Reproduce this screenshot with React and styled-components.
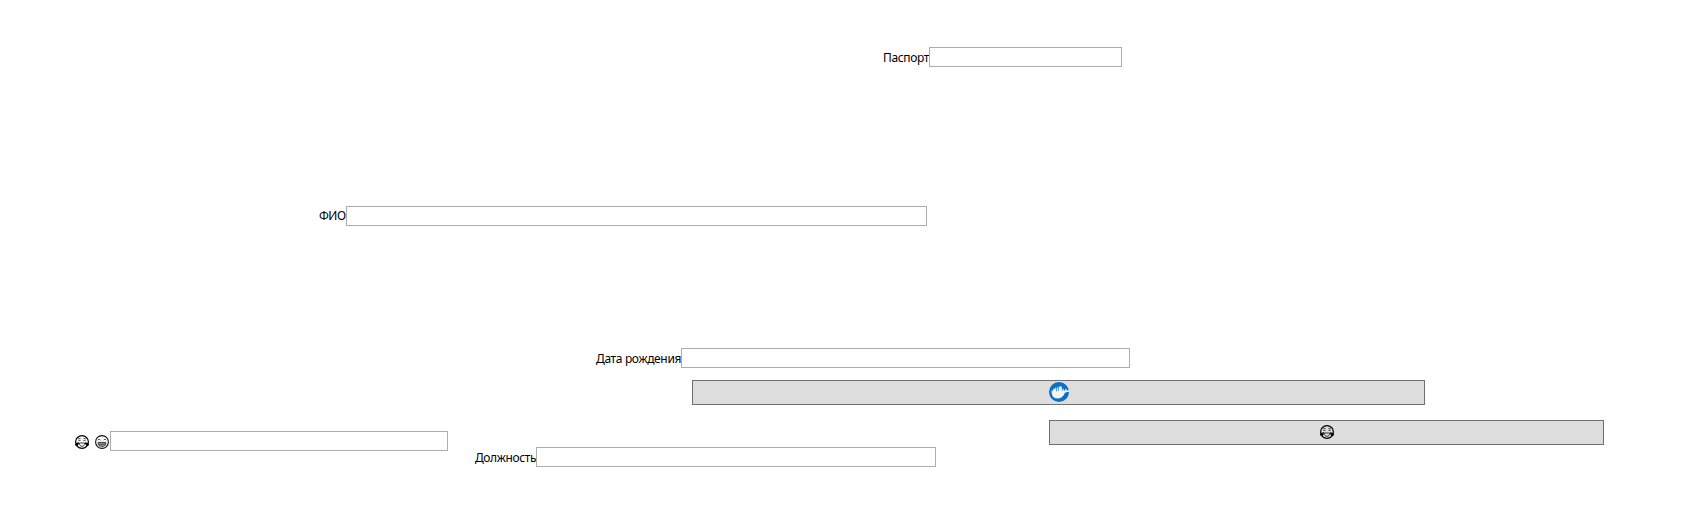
import React from "react";
import styled, { createGlobalStyle } from "styled-components";

const GlobalStyle = createGlobalStyle`
  *, *::before, *::after { box-sizing: border-box; }
  body { margin: 0; background: #fff; overflow: hidden; }
`;

const Form = styled.form`
  width: 1708px;
  height: 527px;
  padding-top: 47px;
  display: flex;
  flex-direction: column;
  align-items: flex-start;
  background: #fff;
  color: #000;
  font-family: "Noto Sans", "Open Sans", sans-serif;
  font-size: 12px;
`;

const Row = styled.div`
  display: flex;
  align-items: flex-start;
  margin-top: ${(p) => p.$gap || 0}px;
  padding-left: ${(p) => p.$indent}px;
`;

const Field = styled.label`
  display: flex;
  height: 20px;
  margin-top: ${(p) => p.$drop || 0}px;
  margin-left: ${(p) => p.$offset || 0}px;
`;

const Caption = styled.span`
  display: flex;
  gap: 4px;
  flex: none;
  width: ${(p) => p.$width}px;
  height: 20px;
  padding-top: ${(p) => p.$top ?? 3}px;
  line-height: 16px;
  white-space: nowrap;
  letter-spacing: ${(p) => p.$tracking || 0}px;
`;

const TextBox = styled.input`
  flex: none;
  width: ${(p) => p.$width}px;
  height: 20px;
  margin: 0;
  padding: 0 3px;
  border: 1px solid #abadb3;
  border-radius: 0;
  background: #fff;
  font: inherit;
  outline: none;
`;

const Button = styled.button`
  flex: none;
  display: flex;
  align-items: center;
  justify-content: center;
  width: ${(p) => p.$width}px;
  height: 25px;
  margin: 0 0 0 ${(p) => p.$offset || 0}px;
  padding: ${(p) => p.$pad || "0"};
  border: 1px solid #707070;
  border-radius: 0;
  background: #ddd;
`;

const Glyph = styled.svg`
  display: block;
  flex: none;
`;

function JoyFace() {
  return (
    <Glyph width="16" height="16" viewBox="0 0 16 16" fill="none" role="img" aria-label="😂">
      <circle cx="8" cy="8" r="6.4" stroke="#000" strokeWidth="1.2" />
      <path d="M4.2 4.9 6.6 4.3M4.3 6.4h2.3M11.8 4.9 9.4 4.3M11.7 6.4H9.4" stroke="#222" strokeWidth=".8" />
      <path d="M5.200 9h5.600c0 2-1.200 3.300-2.800 3.300S5.200 11 5.200 9Z" stroke="#222" strokeWidth=".9" />
      <path d="M4.900 8.200C2.700 8.300 1.100 9.300 1.100 10.500c0 1 .8 1.600 1.700 1.400C4.300 11.600 4.900 10.200 4.900 8.200ZM11.100 8.200c2.200.1 3.800 1.100 3.800 2.300 0 1-.8 1.600-1.700 1.400-1.500-.3-2.100-1.700-2.100-3.700Z" fill="#000" />
    </Glyph>
  );
}

function GrinFace() {
  return (
    <Glyph width="16" height="16" viewBox="0 0 16 16" fill="none" role="img" aria-label="😁">
      <circle cx="8" cy="8" r="6.4" stroke="#111" strokeWidth="1.1" />
      <path d="M3.900 6.200c.5-1.200 1.900-1.200 2.500 0M9.600 6.200c.6-1.200 2-1.200 2.500 0" stroke="#222" strokeWidth=".9" />
      <path d="M4.200 8.400h7.600v1.100c0 1.900-1.200 2.800-3.800 2.800s-3.800-.9-3.800-2.800Z" fill="#aaa" stroke="#222" strokeWidth=".9" />
      <path d="M4.500 10.200h7" stroke="#222" strokeWidth=".8" />
    </Glyph>
  );
}

function DockerLogo() {
  return (
    <Glyph width="20" height="20" viewBox="0 0 20 20" role="img" aria-label="Docker">
      <circle cx="10" cy="10" r="10" fill="#0b6fc4" />
      <path
        d="M2.600 8.600h1.700V6.700h2V5.400h3.400V4.400h3.200V6.700h1.800v1.900h1.500c-.1-.9.1-1.700.6-2.200.7.500 1 1.200 1.100 2h2.100v1.600h-2.100c-.7.4-1.400.6-2 .7-1.300 3.800-3.900 5.900-7.600 5.900C4.500 16.600 2.300 13.600 2.600 8.600Z"
        fill="#f4f4f4"
      />
      <path d="M7.500 5v4.300M9.500 5v3.800M13.300 4v4.800" stroke="#0b6fc4" strokeWidth=".7" />
    </Glyph>
  );
}

export default function App() {
  return (
    <>
      <GlobalStyle />
      <Form onSubmit={(e) => e.preventDefault()}>
        <Row $indent={883}>
          <Field>
            <Caption $width={46} $tracking={-0.35}>Паспорт</Caption>
            <TextBox $width={193} />
          </Field>
        </Row>
        <Row $indent={319} $gap={139}>
          <Field>
            <Caption $width={27} $top={2} $tracking={-0.5}>ФИО</Caption>
            <TextBox $width={581} />
          </Field>
        </Row>
        <Row $indent={596} $gap={122}>
          <Field>
            <Caption $width={85} $tracking={-0.35}>Дата рождения</Caption>
            <TextBox $width={449} />
          </Field>
        </Row>
        <Row $indent={692} $gap={12}>
          <Button type="button" $width={733} $pad="0 0 1px 1px">
            <DockerLogo />
          </Button>
        </Row>
        <Row $indent={74} $gap={15}>
          <Field $drop={11}>
            <Caption $width={36}>
              <JoyFace />
              <GrinFace />
            </Caption>
            <TextBox $width={338} />
          </Field>
          <Field $drop={27} $offset={27}>
            <Caption $width={61} $tracking={-0.38}>Должность</Caption>
            <TextBox $width={400} />
          </Field>
          <Button type="button" $width={555} $offset={113} $pad="0 0 1px 1px">
            <JoyFace />
          </Button>
        </Row>
      </Form>
    </>
  );
}
